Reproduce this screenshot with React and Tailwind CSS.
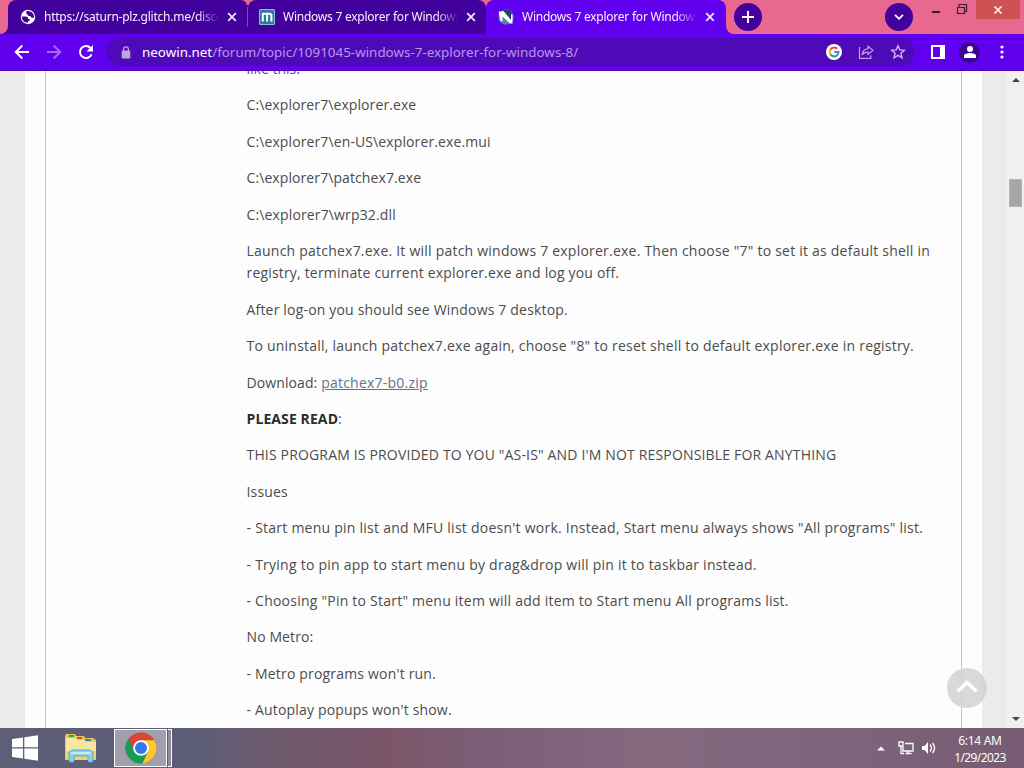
import React from 'react';

const paragraphs = [
  { text: 'C:\\explorer7\\explorer.exe', className: 'tracking-[0.09px]' },
  { text: 'C:\\explorer7\\en-US\\explorer.exe.mui', className: 'tracking-[0.11px]' },
  { text: 'C:\\explorer7\\patchex7.exe', className: 'tracking-[0.09px]' },
  { text: 'C:\\explorer7\\wrp32.dll', className: 'tracking-[0.14px]' },
  {
    text: <>Launch patchex7.exe. It will patch windows 7 explorer.exe. Then choose "7" to set it as default shell in<br /><span className="tracking-[0.18px]">registry, terminate current explorer.exe and log you off.</span></>,
    className: 'tracking-[0.223px]',
  },
  { text: 'After log-on you should see Windows 7 desktop.', className: 'tracking-[0.18px]' },
  { text: 'To uninstall, launch patchex7.exe again, choose "8" to reset shell to default explorer.exe in registry.', className: 'tracking-[0.225px]' },
  { text: <>Download: <a className="tracking-[0.23px] text-[#5f728c] underline">patchex7-b0.zip</a></>, className: 'tracking-[0.1px]' },
  { text: <><b className="font-bold text-[#2c2c2c]">PLEASE READ</b>:</>, className: 'tracking-[0.1px]' },
  { text: 'THIS PROGRAM IS PROVIDED TO YOU "AS-IS" AND I\'M NOT RESPONSIBLE FOR ANYTHING', className: 'tracking-[0.165px]' },
  { text: 'Issues', className: 'tracking-[0.16px]' },
  { text: '- Start menu pin list and MFU list doesn\'t work. Instead, Start menu always shows "All programs" list.', className: 'tracking-[0.245px]' },
  { text: '- Trying to pin app to start menu by drag&drop will pin it to taskbar instead.', className: 'tracking-[0.245px]' },
  { text: '- Choosing "Pin to Start" menu item will add item to Start menu All programs list.', className: 'tracking-[0.23px]' },
  { text: 'No Metro:', className: 'tracking-[0.1px]' },
  { text: "- Metro programs won't run.", className: 'tracking-[0.18px]' },
  { text: "- Autoplay popups won't show.", className: 'tracking-[0.17px]' },
];

function Globe() {
  return (
    <svg viewBox="0 0 16 16" className="size-4 shrink-0">
      <circle cx="8" cy="8" r="7.2" fill="#fff" />
      <path d="M1.900 7.600h3.600c1.700 0 2.600.9 2.600 2.300h1.600v2H8v1.900C4.500 14 1.700 11.200 1.900 7.600ZM6.300 2.300v1.600c0 1 .8 1.700 1.800 1.700v1.300h2.400c0 1.100.8 1.800 1.700 1.800h1.900C14.200 5 11.700 2 8 2Z" fill="#42009c" />
    </svg>
  );
}

function MsfnIcon() {
  return (
    <svg viewBox="0 0 16 16" className="size-4 shrink-0">
      <rect width="16" height="16" rx="1.500" fill="#8dbfd9" />
      <rect x="1" y="1" width="14" height="14" rx="1" fill="#31779c" />
      <path d="M3.800 12.500V4.800h7.400l1.200 1.200v6.500M8.100 4.800v7.700" fill="none" stroke="#fff" strokeWidth="2" />
    </svg>
  );
}

function NeowinIcon() {
  return (
    <svg viewBox="0 0 16 16" className="size-4 shrink-0">
      <circle cx="8" cy="8" r="7.700" fill="#5582b2" />
      <path d="M4.500 1.200c4-2 8.500.3 9.300 3.300L13 12Z" fill="#1d3f68" />
      <path d="M.6 2.800 5.500 2l7.500 9V5l1.500 1v8.500H12L4.500 7.500v5L2.500 12Z" fill="#fff" />
    </svg>
  );
}

function Cross() {
  return (
    <svg viewBox="0 0 10 10" className="size-2.5 shrink-0">
      <path d="m1.200 1.200 7.600 7.600M8.800 1.200 1.200 8.800" stroke="#f6e9ff" strokeWidth="1.700" />
    </svg>
  );
}

function Tab({ icon, title, className }) {
  return (
    <div className={'flex h-[34px] shrink-0 items-center ' + className}>
      {icon}
      <div className="ml-2 w-[175px] shrink-0 overflow-hidden whitespace-nowrap text-[12px] leading-4 tracking-[-0.24px] text-[#fbf0ff] [mask-image:linear-gradient(to_right,black_153px,transparent_176px)]">{title}</div>
      <div className="ml-2 flex"><Cross /></div>
    </div>
  );
}

function TabStrip() {
  return (
    <div className="flex h-[34px] bg-[#e9688f]">
      <svg viewBox="0 0 8 8" className="mt-[26px] size-2 shrink-0"><path d="M8 0v8H0a8 8 0 0 0 8-8Z" fill="#42009c" /></svg>
      <Tab icon={<Globe />} title="https://saturn-plz.glitch.me/disco" className="w-[239px] rounded-tl-lg rounded-tr-md bg-[#42009c] pl-3" />
      <div className="mt-[5px] flex w-px items-center bg-[#42009c]"><div className="-mt-[5px] h-5 w-px bg-[#8744cb]" /></div>
      <Tab icon={<MsfnIcon />} title="Windows 7 explorer for Windows 8" className="w-[238px] rounded-t-lg bg-[#42009c] pl-[11px]" />
      <Tab icon={<NeowinIcon />} title="Windows 7 explorer for Windows 8" className="w-[240px] rounded-t-lg bg-[#6000ee] pl-3" />
      <svg viewBox="0 0 8 8" className="mt-[26px] size-2 shrink-0"><path d="M0 0v8h8a8 8 0 0 1-8-8Z" fill="#6000ee" /></svg>
      <div className="mt-[3px] flex size-7 items-center justify-center rounded-full bg-[#42009c]">
        <svg viewBox="0 0 12 12" className="size-3"><path d="M6 0v12M0 6h12" stroke="#fff" strokeWidth="2" /></svg>
      </div>
      <div className="ml-[123px] mt-[3px] flex size-7 items-center justify-center rounded-full bg-[#42009c]">
        <svg viewBox="0 0 10 6" className="h-1.5 w-2.5"><path d="m1 .8 4 4 4-4" fill="none" stroke="#fff" strokeWidth="1.800" /></svg>
      </div>
      <svg viewBox="0 0 36 18" className="ml-[19px] mt-px h-[18px] w-9 shrink-0">
        <path d="M0 11h8" stroke="#3b1c31" strokeWidth="2" />
        <path d="M25.500 6.500h7v6h-7zM27 6V3.500h7.500v7H33" fill="none" stroke="#3b1c31" strokeWidth="1.200" />
      </svg>
      <div className="ml-[8px] flex h-[19px] w-[44px] items-center justify-center bg-[#ce5252]">
        <svg viewBox="0 0 8 8" className="size-2"><path d="m.5.5 7 7m0-7-7 7" stroke="#fff" strokeWidth="1.500" /></svg>
      </div>
    </div>
  );
}

function Toolbar() {
  return (
    <div className="flex h-[37px] items-center border-b border-[#4b08bd] bg-[#6000ee]">
      <svg viewBox="0 0 96 18" className="ml-3.5 h-[18px] w-24 shrink-0" fill="none">
        <path d="M15 9H2M8.300 2.500 1.800 9l6.500 6.500" stroke="#fff" strokeWidth="2" />
        <path d="M33 9h13M39.700 2.500 46.200 9l-6.500 6.500" stroke="#a968f2" strokeWidth="2" />
        <path d="M77.600 11.300A6 6 0 1 1 76.500 5" stroke="#fff" strokeWidth="2" />
        <path d="M79 2v6.500h-6.500Z" fill="#fff" />
      </svg>
      <div className="-ml-[3px] flex h-7 w-[808px] shrink-0 items-center rounded-full bg-[#4f0ab8] pl-[14px]">
        <svg viewBox="0 0 10 13" className="h-[13px] w-[10px] shrink-0">
          <rect x=".7" y="4.500" width="8.600" height="8" rx="1" fill="#bba5dd" />
          <path d="M2.600 5V3.200a2.400 2.400 0 0 1 4.800 0V5" fill="none" stroke="#bba5dd" strokeWidth="1.300" />
        </svg>
        <div className="ml-[11px] w-[684px] whitespace-nowrap text-[13.400px] leading-5 text-[#b996ea]"><span className="text-white">neowin.net</span>/forum/topic/1091045-windows-7-explorer-for-windows-8/</div>
        <svg viewBox="0 0 16 16" className="size-4 shrink-0" fill="none">
          <circle cx="8" cy="8" r="8" fill="#fff" />
          <path d="M4.300 5.700A4.500 4.500 0 0 1 11.200 4.800" stroke="#ea4335" strokeWidth="2" />
          <path d="M4.300 5.700a4.500 4.500 0 0 0 0 4.600" stroke="#fbbc05" strokeWidth="2" />
          <path d="M4.300 10.300a4.500 4.500 0 0 0 6.600 1.100" stroke="#34a853" strokeWidth="2" />
          <path d="M10.900 11.400A4.500 4.500 0 0 0 12.500 8H8.200" stroke="#4285f4" strokeWidth="2" />
        </svg>
        <svg viewBox="0 0 16 16" className="ml-4 size-4 shrink-0" fill="none" stroke="#c79bec" strokeWidth="1.200">
          <path d="M1.500 3v11.300h11.300v-3" />
          <path d="M10 2.200 15 6.300l-5 4.200V8.200c-3 0-4.800 1-6 2.800.5-3.500 2.500-6 6-6.400Z" />
        </svg>
        <svg viewBox="0 0 16 16" className="ml-4 size-4 shrink-0"><path d="m8 1.700 1.800 4.200 4.600.4-3.500 3 1.100 4.500L8 11.400l-4 2.400 1.100-4.500-3.500-3 4.600-.4Z" fill="none" stroke="#d9b2f4" strokeWidth="1.400" /></svg>
      </div>
      <svg viewBox="0 0 14 14" className="ml-4 size-3.5 shrink-0"><path d="M1 1h12v12H1Z" fill="none" stroke="#fff" strokeWidth="2" /><path d="M9 0h5v14H9z" fill="#fff" /></svg>
      <div className="ml-[14px] flex size-[21px] shrink-0 items-center justify-center rounded-full bg-[#3d0590]">
        <svg viewBox="0 0 12 12" className="size-3" fill="#fff"><circle cx="6" cy="3" r="3" /><path d="M0 12V9.700C0 8 3.500 7 6 7s6 1 6 2.700V12Z" /></svg>
      </div>
      <svg viewBox="0 0 4 14" className="ml-5 h-3.5 w-1 shrink-0" fill="#fff"><circle cx="2" cy="2" r="1.600" /><circle cx="2" cy="7" r="1.600" /><circle cx="2" cy="12" r="1.600" /></svg>
    </div>
  );
}

function Page() {
  return (
    <div className="relative flex h-[657px] overflow-hidden bg-[#ebebeb]">
      <div className="ml-[25px] w-[957px] bg-[#fdfdfd] pl-5">
        <div className="flow-root h-full w-[917px] border-x border-[#c6c6c6] pl-[200.500px]">
          <div className="-mt-[13.100px] flex flex-col gap-3.5 whitespace-nowrap font-['Open_Sans',sans-serif] text-[14px] leading-[22.400px] text-[#4c4c4c]">
            <p className="text-[#524a86]">like this:</p>
            {paragraphs.map((p, i) => <p key={i} className={p.className}>{p.text}</p>)}
          </div>
        </div>
      </div>
      <div className="flex-1" />
      <div className="flex w-[17px] flex-col items-center bg-[#f0f0f0]">
        <svg viewBox="0 0 8 4" className="mt-[7px] h-1 w-2"><path d="M0 4 4 0l4 4Z" fill="#444" /></svg>
        <div className="mt-[97px] h-7 w-[13px] border border-[#b4b4b4] bg-[#a6a6a6]" />
        <svg viewBox="0 0 8 4" className="mb-[7px] mt-auto h-1 w-2"><path d="m0 0 4 4 4-4Z" fill="#444" /></svg>
      </div>
      <div className="absolute left-[947px] top-[597px] flex size-10 items-center justify-center rounded-full bg-[#d2d2d2]/85">
        <svg viewBox="0 0 22 14" className="-mt-0.5 h-3.5 w-[22px]"><path d="m1.500 11.500 9.500-9 9.500 9" fill="none" stroke="#fff" strokeWidth="3.600" /></svg>
      </div>
    </div>
  );
}

function FolderIcon() {
  return (
    <svg viewBox="0 0 34 30" className="ml-[26px] h-[30px] w-[34px]">
      <path d="M1 3 2 1h9l1 2h8l1 2h8l3 2v20H1Z" fill="#e4c85b" />
      <path d="M5 2h5v2H5Z" fill="#2ea64a" /><path d="M13 4h5v2h-5Z" fill="#d84f35" /><path d="M21 6h6v2h-6Z" fill="#3c7ecb" />
      <path d="M2 5h9l3 2h6l3 2h9v18H2Z" fill="#f7e79f" />
      <path d="M2 18h30v9H2Z" fill="#efd572" />
      <path d="M5 29V19l3-2h18l3 2v10h-5v-6H10v6Z" fill="#8bd2ea" stroke="#499fc5" strokeWidth=".8" />
      <path d="M7 20h20" stroke="#d9f5fc" strokeWidth="1.500" />
    </svg>
  );
}

function ChromeIcon() {
  return (
    <svg viewBox="0 0 32 32" className="size-8">
      <circle cx="16" cy="16" r="15.500" fill="#dc4437" />
      <path d="M3.600 6.700A15.500 15.500 0 0 0 17.500 31.400l5.200-11.500L9.300 19.900Z" fill="#179c55" />
      <path d="M17.500 31.400A15.500 15.500 0 0 0 29.400 8.200H16l6.700 11.700Z" fill="#fbc92f" />
      <circle cx="16" cy="16" r="7.800" fill="#fff" />
      <circle cx="16" cy="16" r="6" fill="#3277e8" />
    </svg>
  );
}

function Taskbar() {
  return (
    <div className="flex h-10 items-center bg-[linear-gradient(to_right,#5e5e78,#5c5d78_190px,#6e5b6e_270px,#7c5568_390px,#7b5f78_490px,#84697f_650px,#7e657b_840px,#765b72_1024px)]">
      <svg viewBox="0 0 26 26" className="ml-3 size-[26px]" fill="#fff"><path d="m0 4 11-1.600V12.300H0ZM12.300 2.200 26 .2v12.100H12.300ZM0 13.600h11v10L0 22ZM12.300 13.600H26v12.200l-13.700-2Z" /></svg>
      <FolderIcon />
      <div className="ml-4 flex h-10 w-[58px] py-px">
        <div className="flex w-[53px] items-center justify-center border border-white bg-[#a19fad]"><ChromeIcon /></div>
        <div className="ml-px w-1 border border-l-0 border-white bg-[#8f8ca0]" />
      </div>
      <svg viewBox="0 0 60 16" className="ml-[705px] h-4 w-[60px]">
        <path d="M0 10.500 4 6.500l4 4Z" fill="#fff" />
        <g fill="none" stroke="#fff" strokeWidth="1.300">
          <path d="M28 3.500h8v7.500h-10V7M28.500 13.500h6M31 11v2.500M22 2h4v4h-4ZM24 6v7.500h3" />
          <path d="M53 4.500c1.700 2 1.700 5 0 7M55.500 3c2.500 3 2.500 7 0 10" />
        </g>
        <path d="M45 6h2.500L51 2v12l-3.500-4H45Z" fill="#fff" />
      </svg>
      <div className="ml-[11px] w-[64px] whitespace-nowrap pt-0.5 text-center text-[12px] leading-[17px] tracking-[-0.300px] text-white"><div>6:14 AM</div><div className="tracking-[-0.600px]">1/29/2023</div></div>
    </div>
  );
}

export default function App() {
  return (
    <div className="h-[768px] w-[1024px] overflow-hidden font-['Noto_Sans','Open_Sans',sans-serif]">
      <TabStrip />
      <Toolbar />
      <Page />
      <Taskbar />
    </div>
  );
}
